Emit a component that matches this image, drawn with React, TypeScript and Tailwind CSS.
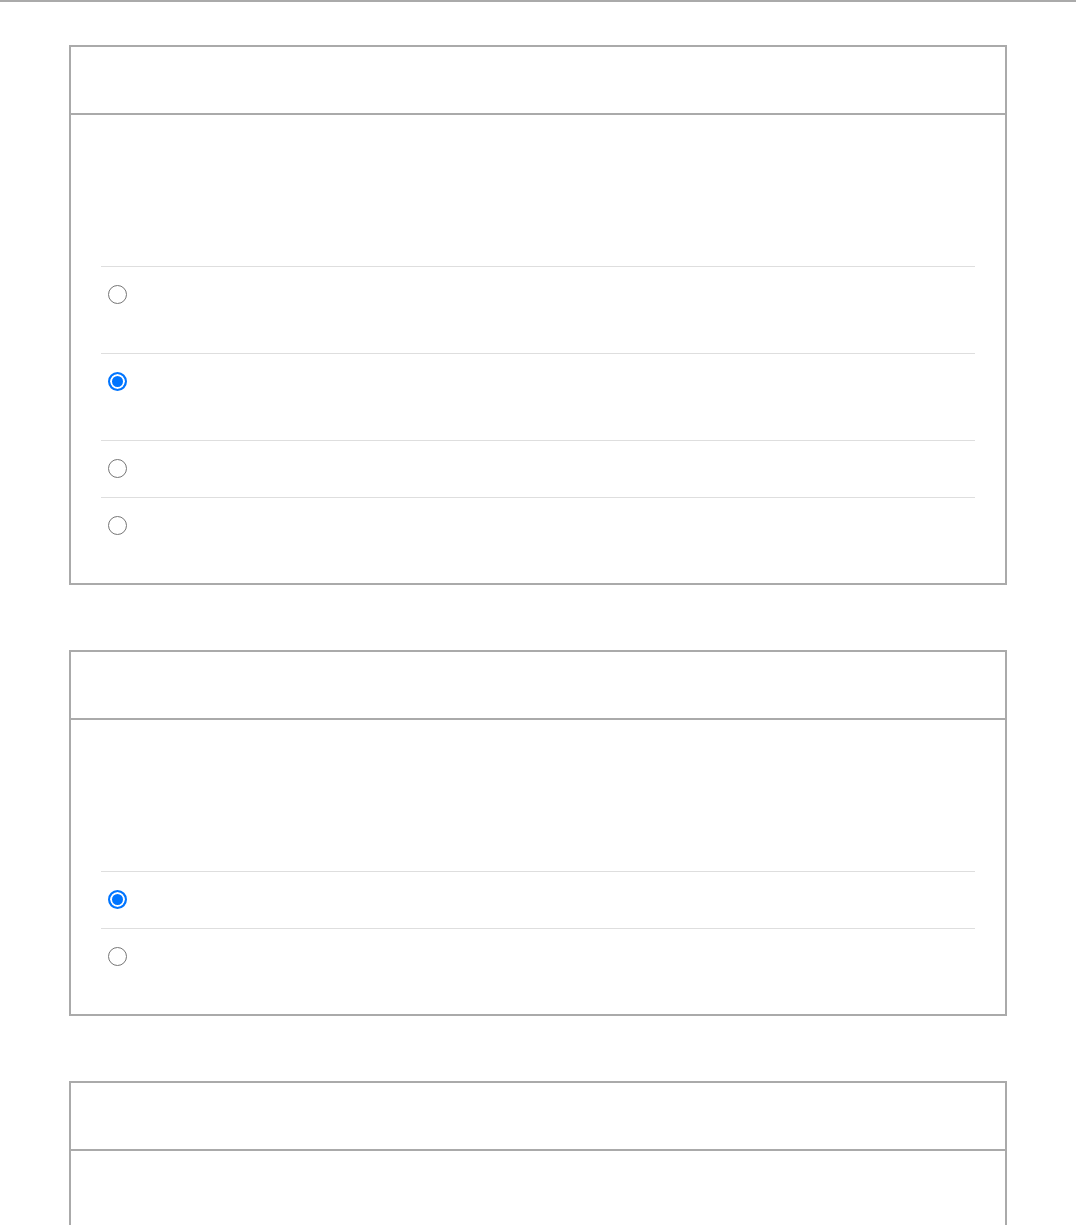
import React, { useState } from 'react';

type Option = { id: string; tall?: boolean };

type Question = { id: string; options: Option[]; initial: string };

const QUESTIONS: Question[] = [
  {
    id: 'q1',
    options: [{ id: 'a', tall: true }, { id: 'b', tall: true }, { id: 'c' }, { id: 'd' }],
    initial: 'b',
  },
  {
    id: 'q2',
    options: [{ id: 'a' }, { id: 'b' }],
    initial: 'a',
  },
  {
    id: 'q3',
    options: [{ id: 'a' }, { id: 'b' }],
    initial: 'a',
  },
];

const QuestionCard: React.FC<{ question: Question }> = ({ question }) => {
  const [selected, setSelected] = useState<string>(question.initial);

  return (
    <section className="border-2 border-[#aaaaaa] bg-white">
      {/* header */}
      <div className="h-[68px] border-b-2 border-[#aaaaaa]"></div>

      {/* body */}
      <div className="px-[30px] pt-[151px] pb-[29px]">
        <div className="flex flex-col">
          {question.options.map((opt) => (
            <label
              key={opt.id}
              className={`flex items-start border-t border-[#dedede] pl-[7px] pt-[18px] ${
                opt.tall ? 'h-[87px]' : 'h-[57px]'
              }`}
            >
              <input
                type="radio"
                name={question.id}
                checked={selected === opt.id}
                onChange={() => setSelected(opt.id)}
                className="m-0 h-[19px] w-[19px] shrink-0 appearance-none rounded-full border-[1.5px] border-[#767676] bg-white checked:border-2 checked:border-[#0075ff] checked:bg-[#0075ff] checked:shadow-[inset_0_0_0_2px_#ffffff]"
              />
            </label>
          ))}
        </div>
      </div>
    </section>
  );
};

const App: React.FC = () => {
  return (
    <div className="min-h-screen bg-white font-['Liberation_Sans',sans-serif]">
      <div className="h-[2px] bg-[#aaaaaa]"></div>
      <div className="flex flex-col gap-[65px] px-[69px] pt-[43px]">
        {QUESTIONS.map((q) => (
          <QuestionCard key={q.id} question={q} />
        ))}
      </div>
    </div>
  );
};

export default App;
